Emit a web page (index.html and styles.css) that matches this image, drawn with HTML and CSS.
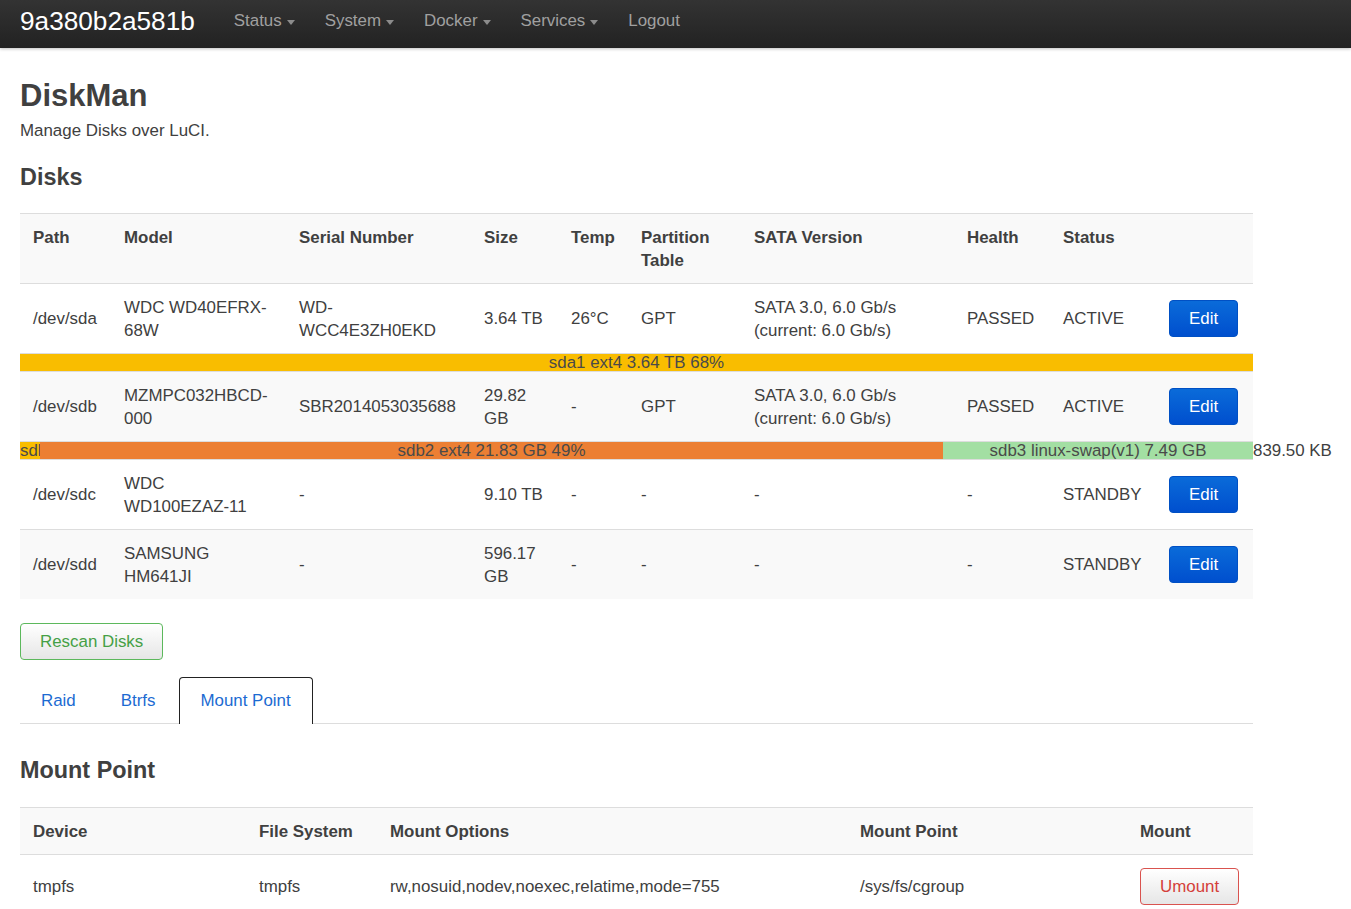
FILE: index.html
```html
<!DOCTYPE html>
<html>
<head>
<meta charset="utf-8">
<title>DiskMan</title>
<link rel="stylesheet" href="styles.css">
</head>
<body>
<header class="navbar">
  <a class="brand">9a380b2a581b</a>
  <nav class="nav">
    <a class="nav-item">Status<span class="caret"></span></a>
    <a class="nav-item">System<span class="caret"></span></a>
    <a class="nav-item">Docker<span class="caret"></span></a>
    <a class="nav-item">Services<span class="caret"></span></a>
    <a class="nav-item">Logout</a>
  </nav>
</header>
<main class="main">
  <h2 class="title">DiskMan</h2>
  <div class="descr">Manage Disks over LuCI.</div>
  <h3 class="section-title">Disks</h3>
  <table class="tbl disks">
    <colgroup>
      <col style="width:91px"><col style="width:175px"><col style="width:185px"><col style="width:87px"><col style="width:70px"><col style="width:113px"><col style="width:213px"><col style="width:96px"><col style="width:106px"><col style="width:97px">
    </colgroup>
    <thead>
      <tr class="row-head">
        <th>Path</th><th>Model</th><th>Serial Number</th><th>Size</th><th>Temp</th><th>Partition Table</th><th>SATA Version</th><th>Health</th><th>Status</th><th></th>
      </tr>
    </thead>
    <tbody>
      <tr class="row-a">
        <td>/dev/sda</td><td>WDC WD40EFRX-68W</td><td>WD-WCC4E3ZH0EKD</td><td>3.64 TB</td><td>26°C</td><td>GPT</td><td>SATA 3.0, 6.0 Gb/s (current: 6.0 Gb/s)</td><td>PASSED</td><td>ACTIVE</td><td><button class="btn btn-edit">Edit</button></td>
      </tr>
      <tr class="row-bar">
        <td colspan="10"><div class="bar"><div class="seg seg-yellow" style="width:100%">sda1 ext4 3.64 TB 68%</div></div></td>
      </tr>
      <tr class="row-b">
        <td>/dev/sdb</td><td>MZMPC032HBCD-000</td><td>SBR2014053035688</td><td>29.82 GB</td><td>-</td><td>GPT</td><td>SATA 3.0, 6.0 Gb/s (current: 6.0 Gb/s)</td><td>PASSED</td><td>ACTIVE</td><td><button class="btn btn-edit">Edit</button></td>
      </tr>
      <tr class="row-bar">
        <td colspan="10"><div class="bar"><div class="seg seg-yellow" style="width:20px">sdb1 vfat 512.00 MB 1%</div><div class="seg seg-orange" style="width:903px">sdb2 ext4 21.83 GB 49%</div><div class="seg seg-green" style="width:310px">sdb3 linux-swap(v1) 7.49 GB</div><div class="seg seg-free">839.50 KB</div></div></td>
      </tr>
      <tr class="row-a">
        <td>/dev/sdc</td><td>WDC WD100EZAZ-11</td><td>-</td><td>9.10 TB</td><td>-</td><td>-</td><td>-</td><td>-</td><td>STANDBY</td><td><button class="btn btn-edit">Edit</button></td>
      </tr>
      <tr class="row-b">
        <td>/dev/sdd</td><td>SAMSUNG HM641JI</td><td>-</td><td>596.17 GB</td><td>-</td><td>-</td><td>-</td><td>-</td><td>STANDBY</td><td><button class="btn btn-edit">Edit</button></td>
      </tr>
    </tbody>
  </table>
  <div class="actions">
    <button class="btn btn-rescan">Rescan Disks</button>
  </div>
  <ul class="tabs">
    <li class="tab">Raid</li>
    <li class="tab">Btrfs</li>
    <li class="tab tab-active">Mount Point</li>
  </ul>
  <h3 class="section-title mp-title">Mount Point</h3>
  <table class="tbl mounts">
    <colgroup>
      <col style="width:226px"><col style="width:131px"><col style="width:470px"><col style="width:280px"><col style="width:126px">
    </colgroup>
    <thead>
      <tr class="row-head">
        <th>Device</th><th>File System</th><th>Mount Options</th><th>Mount Point</th><th>Mount</th>
      </tr>
    </thead>
    <tbody>
      <tr class="row-a">
        <td>tmpfs</td><td>tmpfs</td><td>rw,nosuid,nodev,noexec,relatime,mode=755</td><td>/sys/fs/cgroup</td><td><button class="btn btn-umount">Umount</button></td>
      </tr>
    </tbody>
  </table>
</main>
</body>
</html>
```

FILE: styles.css
```css
html, body {
  margin: 0;
  padding: 0;
}
body {
  font-family: "Liberation Sans", Arial, sans-serif;
  font-size: 16.9px;
  line-height: 23px;
  color: #404040;
  background: #fff;
}
.navbar {
  height: 48px;
  display: flex;
  align-items: center;
  padding-left: 20px;
  background: linear-gradient(#333333, #222222);
  box-shadow: 0 1px 3px rgba(0,0,0,0.25);
}
.brand {
  font-size: 26.2px;
  color: #ffffff;
  line-height: 30px;
  margin-top: -7px;
}
.nav {
  display: flex;
  margin-left: 24px;
  margin-top: -7px;
}
.nav-item {
  color: #a0a0a0;
  padding: 0 15px;
  display: flex;
  align-items: center;
}
.caret {
  display: inline-block;
  width: 0;
  height: 0;
  margin-left: 5px;
  margin-top: 3px;
  border-left: 4.5px solid transparent;
  border-right: 4.5px solid transparent;
  border-top: 5px solid #8c8c8c;
}
.main {
  width: 1233px;
  padding: 0 20px;
}
.title {
  font-size: 31px;
  line-height: 37px;
  font-weight: bold;
  margin: 29px 0 5px;
}
.descr {
  margin: 0;
}
.section-title {
  font-size: 23.4px;
  line-height: 28px;
  font-weight: bold;
  margin: 21px 0 22px;
}
.tbl {
  width: 1233px;
  table-layout: fixed;
  border-collapse: collapse;
  border-spacing: 0;
  border-top: 1px solid #dddddd;
}
.tbl th, .tbl td {
  padding: 11.5px 13px;
  text-align: left;
  vertical-align: middle;
}
.tbl th {
  font-weight: bold;
  vertical-align: top;
}
.row-head {
  background: #f9f9f9;
}
.row-a td, .row-b td {
  border-top: 1px solid #dddddd;
}
.row-a {
  background: #ffffff;
}
.row-b {
  background: #f9f9f9;
}
.tbl .row-bar td {
  padding: 0;
  border-top: 1px solid #dddddd;
}
.bar {
  display: flex;
  height: 17px;
}
.seg {
  flex: none;
  height: 17px;
  line-height: 17px;
  white-space: nowrap;
  overflow: hidden;
  text-align: center;
  color: #4a4a4a;
}
.seg-yellow {
  background: #f9bd00;
}
.seg-orange {
  background: #ec7f33;
}
.seg-green {
  background: #a3dfa3;
}
.seg-free {
  width: 0;
  overflow: visible;
  text-align: left;
  color: #404040;
}
.btn {
  font-family: inherit;
  font-size: 16.9px;
  line-height: 23px;
  border-radius: 4px;
  cursor: pointer;
  margin: 0;
}
.btn-edit {
  padding: 6px 19px;
  color: #ffffff;
  border: 1px solid #0050c4;
  background: linear-gradient(#0a6bd9, #004fce);
}
.actions {
  margin-top: 24px;
}
.btn-rescan {
  padding: 6px 19px;
  color: #45a045;
  border: 1px solid #5cb85c;
  background: linear-gradient(#ffffff, #e6e6e6);
}
.tabs {
  list-style: none;
  margin: 17px 0 0;
  padding: 0;
  display: flex;
  border-bottom: 1px solid #dddddd;
}
.tab {
  padding: 11px 20px;
  margin-right: 3px;
  border: 1px solid transparent;
  border-bottom: 0;
  color: #1c6bd2;
  margin-bottom: -1px;
  border-radius: 4px 4px 0 0;
}
.tab-active {
  border-color: #222222;
  background: #ffffff;
  padding: 11px 21px 12px 20px;
}
.mp-title {
  margin-top: 32px;
  margin-bottom: 23px;
}
.mounts tbody td {
  padding-top: 13px;
  padding-bottom: 13px;
}
.btn-umount {
  padding: 6px 19px;
  color: #d43f3a;
  border: 1px solid #d9534f;
  background: linear-gradient(#ffffff, #e6e6e6);
}
```
